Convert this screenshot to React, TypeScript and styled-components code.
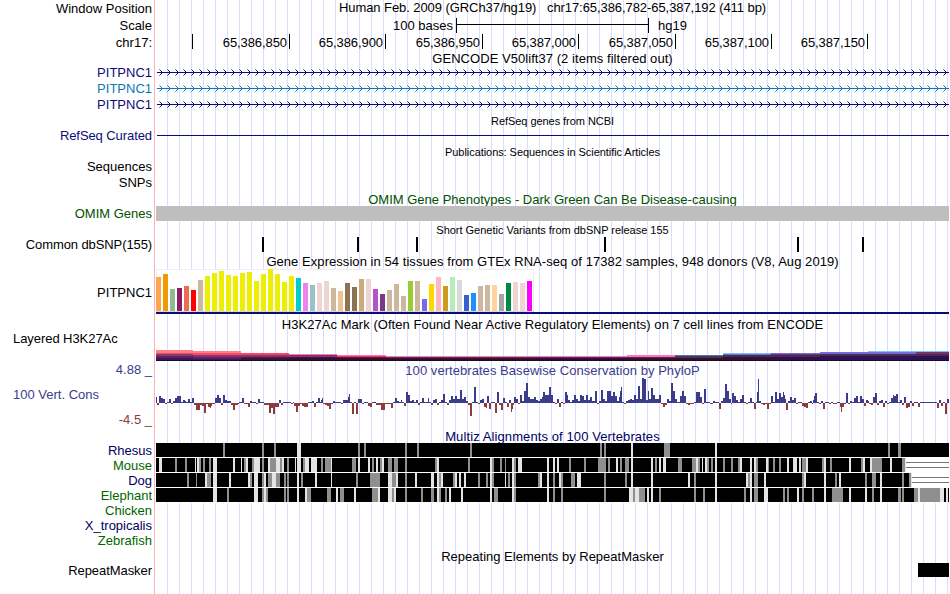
import React from "react";
import styled, { createGlobalStyle } from "styled-components";

const GlobalStyle = createGlobalStyle`
  * { box-sizing: border-box; }
  body { margin: 0; background: #fff; overflow: hidden; }
`;

const NAVY = "#0c0c78";
const BLUE_WIG = "#3c3c8c";
const RED_WIG = "#8c3c3c";

const Browser = styled.main`
  width: 949px;
  height: 594px;
  display: flex;
  flex-direction: column;
  font-family: "Liberation Sans", Arial, sans-serif;
  font-size: 13px;
  line-height: 15px;
  color: #000;
  background:
    linear-gradient(#ffb4b4, #ffb4b4) 154px 0 / 1px 100% no-repeat,
    repeating-linear-gradient(to right, #dcdcff 0 1px, transparent 1px 12px) 167px 0 / 782px 100% no-repeat;
`;

const Row = styled.div<{ $h: number }>`
  flex: none;
  display: grid;
  grid-template-columns: 152px 793px;
  column-gap: 4px;
  height: ${(p) => p.$h}px;
`;

const Label = styled.div<{ $color?: string; $top?: number; $left?: boolean; $ls?: number }>`
  white-space: pre;
  text-align: ${(p) => (p.$left ? "left" : "right")};
  padding-left: ${(p) => (p.$left ? 13 : 0)}px;
  padding-top: ${(p) => p.$top ?? 0}px;
  letter-spacing: ${(p) => p.$ls ?? 0}px;
  color: ${(p) => p.$color ?? "#000"};
`;

const Title = styled.div<{ $color?: string; $small?: boolean; $top?: number; $ls?: number }>`
  white-space: pre;
  text-align: center;
  padding-top: ${(p) => p.$top ?? 0}px;
  font-size: ${(p) => (p.$small ? 11 : 13)}px;
  letter-spacing: ${(p) => p.$ls ?? 0}px;
  color: ${(p) => p.$color ?? "#000"};
`;

const RaisedTitle = styled(Title)`
  margin-top: -1px;
`;

const Plot = styled.svg`
  display: block;
  width: 793px;
  height: 100%;
  shape-rendering: crispEdges;
`;

const ScaleLine = styled.div`
  display: grid;
  grid-template-columns: 60px 193px auto;
  column-gap: 3px;
  padding: 1px 0 0 237px;
  white-space: pre;
`;

const ScaleBar = styled.div`
  height: 15px;
  border: solid #000;
  border-width: 0 1px;
  background: linear-gradient(#000, #000) 0 6px / 100% 1px no-repeat;
`;

const Assembly = styled.div`
  padding-left: 6px;
`;

const Ruler = styled.div`
  display: flex;
  padding-top: 1px;
`;

const Tick = styled.div<{ $w: number }>`
  width: ${(p) => p.$w}px;
  height: 15px;
  padding: 1px 2px 0 0;
  border-right: 1px solid #000;
  text-align: right;
  letter-spacing: -0.08px;
`;

const Band = styled.div`
  height: 15px;
  background: #bebebe;
`;

const Repeat = styled.div`
  justify-self: end;
  width: 31px;
  height: 14px;
  background: #000;
`;

const TICKS: [number, string][] = [
  [37, ""], [97, "65,386,850"], [96, "65,386,900"], [97, "65,386,950"],
  [96, "65,387,000"], [97, "65,387,050"], [96, "65,387,100"], [96, "65,387,150"],
];

const GENES = [NAVY, "#0c78b4", NAVY];

const SNPS = [262, 357, 416, 604, 797, 862];

const GTEX: [string, number[]][] = [
  ["#ffa54f", [34]], ["#ee9a00", [37]], ["#8fbc8f", [22]], ["#8b1c62", [23]], ["#ee6a50", [25]],
  ["#ff0000", [21]], ["#cdb79e", [31]],
  ["#eeee00", [35, 38, 40, 36, 35, 38, 39, 30, 37, 42, 37, 29, 35]],
  ["#00cdcd", [33]], ["#ee82ee", [28]], ["#9ac0cd", [26]], ["#eed5d2", [28, 30]], ["#cdb79e", [23]],
  ["#eec591", [20]], ["#8b7355", [28, 24]], ["#cdaa7d", [32]], ["#eed5d2", [32]], ["#b452cd", [22]],
  ["#7a378b", [17]], ["#cdb79e", [21, 27, 15]], ["#9acd32", [30]], ["#cdb79e", [30]], ["#7a67ee", [12]],
  ["#ffd700", [27]], ["#ffb6c1", [34]], ["#cd9b1d", [25]], ["#b4eeb4", [34]], ["#d9d9d9", [31]],
  ["#3a5fcd", [16]], ["#1e90ff", [18]], ["#cdb79e", [25, 26]], ["#ffd39b", [26]], ["#a6a6a6", [17]],
  ["#008b45", [28]], ["#eed5d2", [29, 28]], ["#ff00ff", [30]],
];
const GTEX_BARS = GTEX.flatMap(([c, hs]) => hs.map((h) => ({ c, h })));

// Each segment: start x, then [top y, colour] bands that reach down to the next band.
const H3K: [number, [number, string][]][] = [
  [156, [[350, "#ff8080"], [353, "#ff4868"], [354, "#803c70"], [356, "#5c2464"], [357, "#641c68"], [358, "#3c1850"], [360, "#1c0828"]]],
  [193, [[351, "#ff8080"], [353, "#ff4868"], [355, "#803870"], [357, "#641c68"], [359, "#3c1850"], [360, "#1c0828"]]],
  [241, [[353, "#ff4068"], [355, "#803868"], [357, "#5c1840"], [358, "#3c1430"], [360, "#1c0828"]]],
  [289, [[354, "#ff70b8"], [355, "#803868"], [357, "#481848"], [358, "#341028"], [360, "#1c0828"]]],
  [337, [[355, "#ff70b8"], [356, "#f83860"], [357, "#601840"], [358, "#341028"], [360, "#1c0828"]]],
  [386, [[356, "#ff70c0"], [357, "#5a3c50"], [358, "#341028"], [360, "#1c0828"]]],
  [530, [[356, "#ff70c0"], [357, "#503080"], [358, "#341028"], [360, "#1c0828"]]],
  [627, [[355, "#ff70c8"], [357, "#602848"], [358, "#381024"], [360, "#1c0828"]]],
  [675, [[355, "#6868b8"], [356, "#403858"], [358, "#381024"], [360, "#1c0828"]]],
  [723, [[353, "#80c0f8"], [354, "#7868d8"], [355, "#403058"], [357, "#301048"], [358, "#381024"], [360, "#1c0828"]]],
  [771, [[353, "#7868d8"], [354, "#803060"], [355, "#403058"], [357, "#301050"], [360, "#1c0828"]]],
  [820, [[352, "#7868d8"], [354, "#403058"], [356, "#301050"], [360, "#1c0828"]]],
  [868, [[351, "#80c0f8"], [352, "#7868d8"], [354, "#403058"], [356, "#301050"], [360, "#1c0828"]]],
  [916, [[351, "#80c0f8"], [352, "#803068"], [354, "#403058"], [356, "#301050"], [360, "#1c0828"]]],
  [949, []],
];

// Step function "x:height"; each value holds until the next x.
const PHYLOP = `156:6 157:-2 159:7 161:5 163:4 165:-1 167:1 169:4 171:-1 173:2 175:5 177:7 181:1 183:3 185:2 186:1 188:4 190:1 192:5 194:-2 196:-7 200:-2 202:-3 204:-10 206:-1 208:-4 210:-5 211:-3 212:-1 215:5 217:8 219:5 221:-2 223:8 225:3 227:2 231:-2 233:-7 235:-2 238:-1 239:1 242:5 244:-1 248:-4 250:2 252:1 256:-1 258:4 260:1 264:-2 269:-10 271:-5 273:-11 275:-4 279:3 281:-2 283:1 291:-1 293:1 294:-3 296:-9 298:-3 300:-1 302:-3 304:-4 308:1 312:2 314:-4 316:1 318:5 320:1 321:3 322:5 323:-1 325:-2 327:-3 329:-6 331:-1 333:2 335:1 341:-1 343:3 348:6 349:9
350:1 352:-11 354:1 356:-11 358:4 362:-1 364:1 368:-3 370:-4 372:1 376:-2 381:-7 385:-1 391:-5 393:1 395:5 397:2 399:1 401:3 402:1 404:-3 406:11 408:8 410:2 412:3 414:1 416:3 418:-2 420:1 422:5 424:1 428:5 429:1 431:-2 433:3 435:4 437:-2 439:1 441:3 443:9 445:1 447:-2 449:3 451:7 453:4 455:7 457:4 460:13 462:4 464:6 466:2 468:-2 470:-13 472:1 474:16 476:1 478:-1 480:3 482:4 484:-4 486:-5 487:7 489:-6 491:1 495:-10 497:11 499:-2 501:-7 503:5 505:1 507:-4 509:3 511:-9 512:-6 513:-2 514:6 516:4 518:-1 520:8 522:2 524:12 526:20 528:6 530:4 534:6 536:3 538:2 540:4 542:6 543:11 545:8 549:16
551:8 553:1 555:-1 557:4 559:-4 561:1 563:-1 565:11 567:8 568:3 570:1 572:3 574:8 576:4 578:2 580:8 582:7 584:3 586:8 588:3 590:6 592:2 595:12 597:-1 599:2 601:13 603:4 605:2 607:12 611:7 613:11 615:7 617:2 619:6 620:12 621:16 622:1 624:-1 626:2 628:3 630:4 632:3 634:8 636:4 638:17 640:4 642:25 644:24 646:3 648:12 649:4 651:15 653:8 655:4 659:8 661:-1 663:-4 665:-2 667:4 669:2 671:20 673:12 675:4 677:1 680:7 682:12 684:7 686:-1 688:-2 690:-1 694:1 696:11 700:6 702:-1 704:14 706:1 710:-1 713:2 715:1 719:-6 721:2 723:5 725:19 727:12 729:4 731:-1 732:10 734:7 736:3 738:1 740:4 742:8 744:1 746:-1 748:1
750:5 752:1 754:-6 756:1 757:11 758:24 759:2 761:-1 763:-2 765:-1 767:-6 769:-1 771:7 773:1 775:11 777:4 779:10 781:6 783:11 784:8 785:4 786:-7 788:2 790:6 792:3 794:5 796:-1 798:1 802:-3 804:-4 806:-5 808:1 810:2 812:-1 813:3 814:7 815:10 817:1 819:-1 821:2 823:-6 825:1 829:-1 831:1 833:-1 837:1 840:-4 841:-9 842:-4 844:-1 846:10 848:-1 850:2 852:1 854:5 856:7 858:1 860:7 862:4 864:-3 866:3 868:2 869:-1 871:-2 873:6 875:10 877:-2 879:2 881:3 883:-4 885:2 887:-1 889:1 891:5 893:8 894:7 896:9 898:1 900:3 902:-2 904:6 906:-5 908:-4 910:2 912:-3 914:1 918:-4 920:1 937:-5 939:3 941:-3 943:1 945:-11 947:4 949:0`
  .split(/\s+/)
  .map((s) => s.split(":").map(Number));

type Species = { name: string; color: string; end?: number; marks?: string };

// Marks are shade + x, with an optional ",width" (2 by default); g is mid grey, l is light grey.
const SPECIES: Species[] = [
  { name: "Rhesus", color: "#000060", marks: "g223 g262 g274 l297,4 g358 g364 g405 g417 g470 g600 g604 l631 g664,6 l715 g888 g898,3" },
  { name: "Mouse", color: "#006400", end: 906, marks: "l159,3 g175 g185 l195,1 l197 g199 g203 g209 l213,4 l233 l241,1 g244 l246 g252 l254,6 g262 l268 g270,6 l276,4 g280 l282 g287 l295,1 l297,4 g303 l305,4 l311,6 g321 g325,6 l331,1 g352,4 l358 l368 g372 l376 g380 l382 g388,4 g394,4 g405 g435 l437 g468 l490 g492 g500 g505,1 l512 g514 l518,4 l547 l553 l557 g569 g584 g598,8 g608 l616 g620 g625,4 l631 l651 g655 l659 l663,3 g678,4 g692,4 l696 g698 l702,1 l705 g707 g711 l715 g723 g731 g738 l740 l750 l754 g756 l766 g768,1 g773 g779 l787 l793,4 l799 g802,4 l806 g822 l824 g830 l849 g861 l863 l870 g872,10 l890 g902,3 l905,1" },
  { name: "Dog", color: "#000060", end: 912, marks: "g187 g196,1 l205 g207,4 l213,4 l229 l248 g250 l254,4 g262 l264 g268,4 l272,4 g276,4 g284 g287 l297 g301 l315 l331,1 g356 g370,10 l388,4 g392,4 l396 g405 l415 l431,3 l437 g439 l441 g453 l455 l459 l464 g478 g486 l490 g492 l505,1 g508 l512 g514 g538 l540 l547 g553 l559 g561 g571,4 l577,4 g604 g625 l631 l651 l688 g694 l715 l746 g748 l750 g754,4 l764 g802 l804 l824 g835 l839 g865 g872,4 l880 g902 g909 l911,1" },
  { name: "Elephant", color: "#006400", marks: "l213,4 g227 l254,4 g262 l264 g266 g284 g287 l297 l305 g307,4 g327,4 l336 g340,4 l354 g372,6 l378 l388,4 g392 l394 g405 g421 g431,3 l437 g439 g445 l449 l461 l490 g494,4 l512 g514 l547 g553 g561 g604 l629,4 g633 l635,4 g639,6 l647 l651 g659 g694 g703 l715 g744 l750 g754,4 l764,4 g783 g787 l797 g802 g812 l824 g832,11 l849 l865 g872 l880 g898,3 g902 g914,4 l918 g920,20 l940,4 l946" },
  { name: "Chicken", color: "#006400" },
  { name: "X_tropicalis", color: "#000060" },
  { name: "Zebrafish", color: "#006400" },
];

function GeneLine({ color }: { color: string }) {
  const arrows = Array.from({ length: 99 }, (_, i) => 162.5 + i * 8);
  return (
    <Plot viewBox="156 0 793 16">
      <rect x={157} y={8} width={792} height={1} fill={color} />
      <path
        d={arrows.map((x) => `M${x - 3} 5.5L${x} 8.5L${x - 3} 11.5`).join("")}
        fill="none"
        stroke={color}
        strokeWidth={1}
        shapeRendering="auto"
      />
    </Plot>
  );
}

function Gtex() {
  return (
    <Plot viewBox="156 269 793 46">
      <rect x={156} y={269} width={378} height={42} fill="#eeeeee" />
      <rect x={157} y={270} width={376} height={41} fill="#ffffff" />
      <rect x={156} y={311} width={378} height={1} fill="#d8d8d8" />
      {GTEX_BARS.map(({ c, h }, i) => (
        <rect key={i} x={156 + i * 7} y={311 - h} width={5} height={h} fill={c} />
      ))}
      <rect x={156} y={312} width={793} height={2} fill={NAVY} />
    </Plot>
  );
}

function Histone() {
  return (
    <Plot viewBox="156 331 793 30">
      {H3K.slice(0, -1).flatMap(([x, bands], i) =>
        bands.map(([y, c]) => (
          <rect key={`${x}-${y}`} x={x} y={y} width={H3K[i + 1][0] - x} height={361 - y} fill={c} />
        )),
      )}
    </Plot>
  );
}

function Conservation() {
  return (
    <Plot viewBox="156 377 793 53">
      {PHYLOP.slice(0, -1).map(([x, h], i) => (
        <rect
          key={x}
          x={x}
          y={h > 0 ? 403 - h : 403}
          width={PHYLOP[i + 1][0] - x}
          height={Math.abs(h)}
          fill={h > 0 ? BLUE_WIG : RED_WIG}
        />
      ))}
    </Plot>
  );
}

function Alignment({ marks, end = 949 }: { marks: string; end?: number }) {
  return (
    <Plot viewBox="156 0 793 15">
      <rect x={156} y={0} width={793} height={15} fill="#fff" />
      <rect x={156} y={0} width={end - 156} height={14} fill="#000" />
      {end < 949 && <path d={`M${end} 4.5H949M${end} 9.5H949`} stroke="#777" />}
      {marks.split(" ").map((m) => {
        const [x, w = 2] = m.slice(1).split(",").map(Number);
        return <rect key={m} x={x} y={0} width={w} height={14} fill={m[0] === "g" ? "#8f8f8f" : "#e4e4e4"} />;
      })}
    </Plot>
  );
}

export default function App() {
  return (
    <>
      <GlobalStyle />
      <Browser>
        <Row $h={17}>
          <Label $top={1}>Window Position</Label>
          <Title $ls={-0.07}>{"Human Feb. 2009 (GRCh37/hg19)   chr17:65,386,782-65,387,192 (411 bp)"}</Title>
        </Row>
        <Row $h={16}>
          <Label $top={1}>Scale</Label>
          <ScaleLine><span>100 bases</span><ScaleBar /><Assembly>hg19</Assembly></ScaleLine>
        </Row>
        <Row $h={18}>
          <Label $top={2}>chr17:</Label>
          <Ruler>{TICKS.map(([w, t]) => <Tick key={t} $w={w}>{t}</Tick>)}</Ruler>
        </Row>
        <Row $h={13}><Label /><Title $ls={0.05}>GENCODE V50lift37 (2 items filtered out)</Title></Row>
        {GENES.map((c, i) => (
          <Row $h={16} key={i}><Label $color={c} $top={1}>PITPNC1</Label><GeneLine color={c} /></Row>
        ))}
        <Row $h={15}><Label /><Title $small $top={2} $ls={-0.05}>RefSeq genes from NCBI</Title></Row>
        <Row $h={16}>
          <Label $color={NAVY} $top={1} $ls={-0.08}>RefSeq Curated</Label>
          <Plot viewBox="156 127 793 16"><rect x={157} y={135} width={792} height={1} fill={NAVY} /></Plot>
        </Row>
        <Row $h={16}><Label /><Title $small $top={2} $ls={-0.06}>Publications: Sequences in Scientific Articles</Title></Row>
        <Row $h={16}><Label>Sequences</Label></Row>
        <Row $h={16}><Label>SNPs</Label></Row>
        <Row $h={15}><Label /><Title $color="#005000" $top={1}>OMIM Gene Phenotypes - Dark Green Can Be Disease-causing</Title></Row>
        <Row $h={16}><Label $color="#005000">OMIM Genes</Label><Band /></Row>
        <Row $h={15}><Label /><Title $small $top={1} $ls={-0.02}>Short Genetic Variants from dbSNP release 155</Title></Row>
        <Row $h={15}>
          <Label $ls={-0.1}>Common dbSNP(155)</Label>
          <Plot viewBox="156 0 793 15">
            {SNPS.map((x) => <rect key={x} x={x} y={0} width={2} height={15} />)}
          </Plot>
        </Row>
        <Row $h={17}><Label /><Title $top={2} $ls={0.055}>Gene Expression in 54 tissues from GTEx RNA-seq of 17382 samples, 948 donors (V8, Aug 2019)</Title></Row>
        <Row $h={46}><Label $top={16}>PITPNC1</Label><Gtex /></Row>
        <Row $h={16}><Label /><Title $top={2} $ls={0.045}>H3K27Ac Mark (Often Found Near Active Regulatory Elements) on 7 cell lines from ENCODE</Title></Row>
        <Row $h={30}><Label $left $ls={-0.06}>Layered H3K27Ac</Label><Histone /></Row>
        <Row $h={16}>
          <Label $color={BLUE_WIG} $top={1}>4.88 _</Label>
          <Title $color={BLUE_WIG} $top={2} $ls={0.05}>100 vertebrates Basewise Conservation by PhyloP</Title>
        </Row>
        <Row $h={53}>
          <div>
            <Label $left $color={BLUE_WIG} $top={10}>100 Vert. Cons</Label>
            <Label $color={RED_WIG} $top={10}>-4.5 _</Label>
          </div>
          <Conservation />
        </Row>
        <Row $h={13}><Label /><RaisedTitle $color="#000060" $ls={0.1}>Multiz Alignments of 100 Vertebrates</RaisedTitle></Row>
        {SPECIES.map((s) => (
          <Row $h={15} key={s.name}>
            <Label $color={s.color}>{s.name}</Label>
            {s.marks && <Alignment marks={s.marks} end={s.end} />}
          </Row>
        ))}
        <Row $h={15}><Label /><Title $top={1}>Repeating Elements by RepeatMasker</Title></Row>
        <Row $h={16}><Label $ls={-0.06}>RepeatMasker</Label><Repeat /></Row>
      </Browser>
    </>
  );
}
